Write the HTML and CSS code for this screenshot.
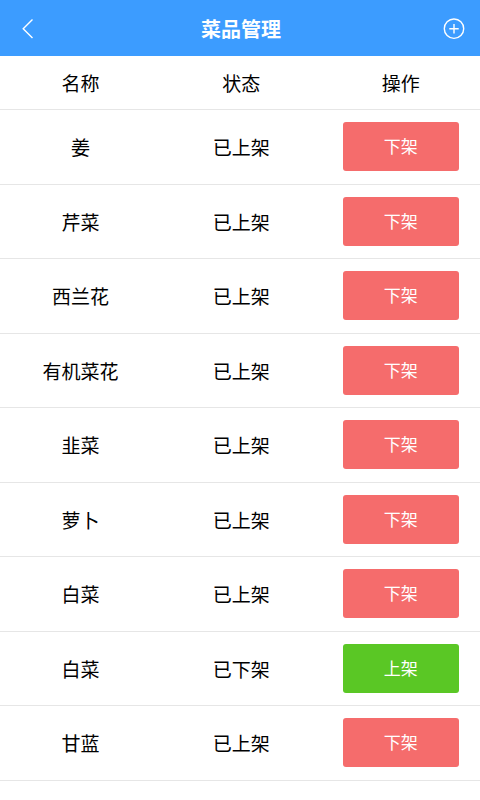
FILE: index.html
```html
<!DOCTYPE html>
<html lang="zh-CN">
<head>
    <meta charset="UTF-8">
    <meta name="viewport" content="width=device-width, initial-scale=1.0">
    <title>菜品管理</title>
    <link rel="stylesheet" href="styles.css">
</head>
<body>
    <header class="navbar">
        <button type="button" class="nav-btn" aria-label="返回">
            <svg width="24" height="24" viewBox="0 0 24 24" fill="none" stroke="#fff" stroke-width="1.4"><path d="M16.5 2.5L7.2 11.7L16.5 21"/></svg>
        </button>
        <h1>菜品管理</h1>
        <button type="button" class="nav-btn" aria-label="添加">
            <svg width="24" height="24" viewBox="0 0 24 24" fill="none" stroke="#fff" stroke-width="1.4"><circle cx="12" cy="11.7" r="9.7"/><path d="M12 7V16.4M7.3 11.7H16.7"/></svg>
        </button>
    </header>

    <table class="dish-table">
        <colgroup><col class="col-text"><col class="col-text"><col></colgroup>
        <thead>
            <tr><th>名称</th><th>状态</th><th>操作</th></tr>
        </thead>
        <tbody>
            <tr><td>姜</td><td>已上架</td><td><button type="button" class="btn btn-off">下架</button></td></tr>
            <tr><td>芹菜</td><td>已上架</td><td><button type="button" class="btn btn-off">下架</button></td></tr>
            <tr><td>西兰花</td><td>已上架</td><td><button type="button" class="btn btn-off">下架</button></td></tr>
            <tr><td>有机菜花</td><td>已上架</td><td><button type="button" class="btn btn-off">下架</button></td></tr>
            <tr><td>韭菜</td><td>已上架</td><td><button type="button" class="btn btn-off">下架</button></td></tr>
            <tr><td>萝卜</td><td>已上架</td><td><button type="button" class="btn btn-off">下架</button></td></tr>
            <tr><td>白菜</td><td>已上架</td><td><button type="button" class="btn btn-off">下架</button></td></tr>
            <tr><td>白菜</td><td>已下架</td><td><button type="button" class="btn btn-on">上架</button></td></tr>
            <tr><td>甘蓝</td><td>已上架</td><td><button type="button" class="btn btn-off">下架</button></td></tr>
        </tbody>
    </table>
</body>
</html>
```

FILE: styles.css
```css
body { margin: 0; background: #fff; color: #000; font-family: "Noto Sans CJK SC", sans-serif; }
button { font-family: inherit; border: none; cursor: pointer; }

.navbar { display: flex; align-items: center; justify-content: space-between; box-sizing: border-box; height: 56px; padding: 2px 14px 0 16px; background: #3c9cff; }
.navbar h1 { margin: 0; color: #fff; font-size: 20px; line-height: 28px; font-weight: bold; }
.nav-btn { display: flex; padding: 0; background: none; }

.dish-table { width: 100%; table-layout: fixed; border-collapse: separate; border-spacing: 0; }
.col-text { width: 33.5%; }
.dish-table th, .dish-table td { border-bottom: 1px solid #e6e6e6; text-align: center; vertical-align: middle; font-weight: normal; font-size: 19px; line-height: 28px; }
.dish-table th { padding: 13px 0 12px; }
.dish-table td { padding: 12px 0 13px; }
.dish-table tr:nth-child(even) td { padding-bottom: 12px; }

.btn { display: block; width: 73%; height: 49px; margin: 0 auto; padding: 0 0 2px; border-radius: 3px; color: #fff; font-size: 17px; line-height: 24px; }
.btn-off { background: #f56c6c; }
.btn-on { background: #5ac725; }
```
